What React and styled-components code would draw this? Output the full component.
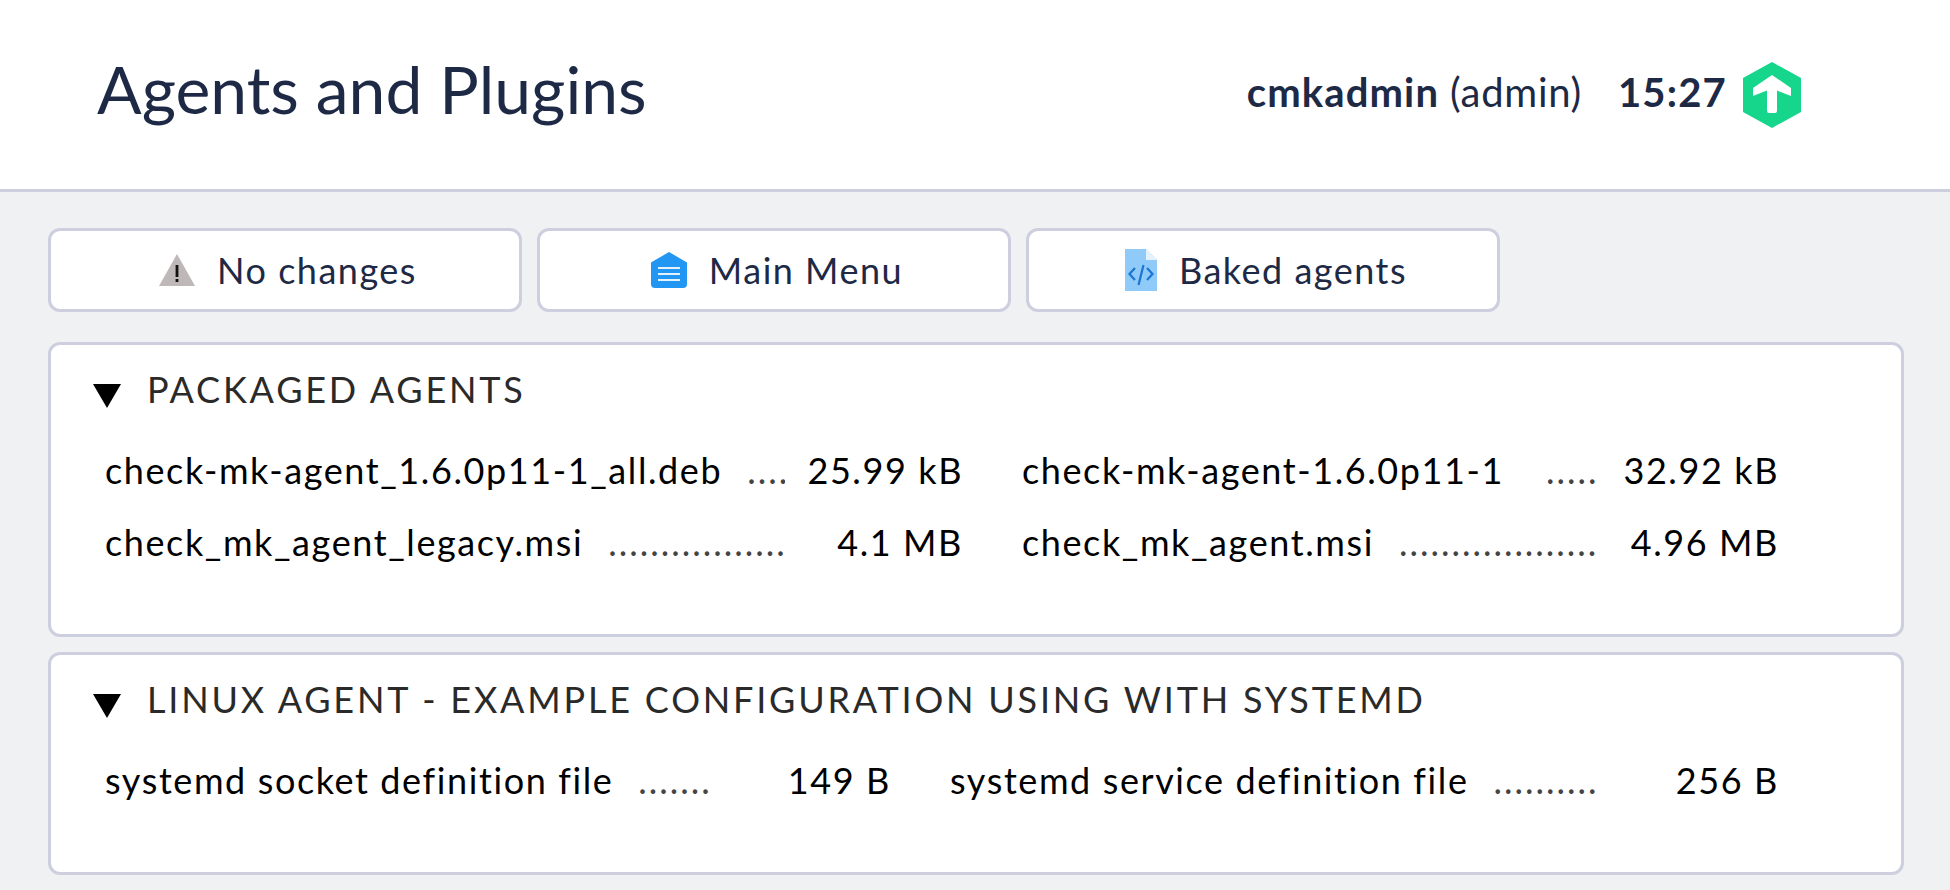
import styled, { createGlobalStyle } from 'styled-components';

const GlobalStyle = createGlobalStyle`
  html, body {
    margin: 0;
    padding: 0;
    background: #f0f1f3;
    font-family: Lato, "Liberation Sans", sans-serif;
  }
`;

const packaged = [
  { name: 'check-mk-agent_1.6.0p11-1_all.deb', size: '25.99 kB', sizeWidth: 178 },
  { name: 'check-mk-agent-1.6.0p11-1', size: '32.92 kB', sizeWidth: 179, clip: true },
  { name: 'check_mk_agent_legacy.msi', size: '4.1 MB', sizeWidth: 178 },
  { name: 'check_mk_agent.msi', size: '4.96 MB', sizeWidth: 179 }
];

const systemd = [
  { name: 'systemd socket definition file', size: '149 B', sizeWidth: 180 },
  { name: 'systemd service definition file', size: '256 B', sizeWidth: 179 }
];

const DOTS = '.'.repeat(60);

function WarningIcon() {
  return (
    <svg width="36" height="32" viewBox="0 0 36 32">
      <path d="M18 0 L36 32 L0 32 Z" fill="#bfb8b8" />
      <rect x="16.6" y="11" width="2.8" height="12" fill="#111" />
      <rect x="16.6" y="25" width="2.8" height="3" fill="#111" />
    </svg>
  );
}

function MenuIcon() {
  return (
    <svg width="36" height="36" viewBox="0 0 36 36">
      <path
        d="M18 0 L36 10.5 V32 a4 4 0 0 1 -4 4 H4 a4 4 0 0 1 -4 -4 V10.5 Z"
        fill="#2196f3"
      />
      <rect x="7" y="15" width="22" height="2" fill="#e3f2fd" />
      <rect x="7" y="21" width="22" height="2" fill="#e3f2fd" />
      <rect x="7" y="27" width="22" height="2" fill="#e3f2fd" />
    </svg>
  );
}

function CodeFileIcon() {
  return (
    <svg width="32" height="42" viewBox="0 0 32 42">
      <path d="M0 0 H21 L32 11 V42 H0 Z" fill="#90caf9" />
      <path d="M21 0 L32 11 H21 Z" fill="#e3f2fd" />
      <path
        d="M10 19 L4.5 25 L10 31 M22 19 L27.5 25 L22 31 M18.5 16 L13.5 36"
        fill="none"
        stroke="#1976d2"
        strokeWidth="2.2"
      />
    </svg>
  );
}

function Logo() {
  return (
    <svg width="58" height="66" viewBox="0 0 58 66">
      <path d="M29 0 L58 16 V50 L29 66 L0 50 V16 Z" fill="#15d68b" />
      <path
        d="M29 13 L48 26 V34 L34 28.5 V49 a2 2 0 0 1 -2 2 H26 a2 2 0 0 1 -2 -2 V28.5 L10 34 V26 Z"
        fill="#fff"
      />
    </svg>
  );
}

function FileEntry({ name, size, sizeWidth, clip }) {
  return (
    <Entry>
      <EntryName $clip={clip}>{name}</EntryName>
      <Dots>{DOTS}</Dots>
      <EntrySize $width={sizeWidth}>{size}</EntrySize>
    </Entry>
  );
}

export default function App() {
  return (
    <>
      <GlobalStyle />
      <Header>
        <Title>Agents and Plugins</Title>
        <HeaderInfo>
          <User>
            <b>cmkadmin</b> (admin)
          </User>
          <Clock>15:27</Clock>
          <Logo />
        </HeaderInfo>
      </Header>

      <Content>
        <Toolbar>
          <ToolButton>
            <WarningIcon />
            No changes
          </ToolButton>
          <ToolButton>
            <MenuIcon />
            Main Menu
          </ToolButton>
          <ToolButton>
            <CodeFileIcon />
            Baked agents
          </ToolButton>
        </Toolbar>

        <Section $height={295}>
          <SectionTitle>
            <Triangle viewBox="0 0 28 24">
              <path d="M0 0 H28 L14 24 Z" />
            </Triangle>
            Packaged agents
          </SectionTitle>
          <EntryGrid $columns="856px 755px">
            {packaged.map((entry) => (
              <FileEntry key={entry.name} {...entry} />
            ))}
          </EntryGrid>
        </Section>

        <Section $height={223}>
          <SectionTitle>
            <Triangle viewBox="0 0 28 24">
              <path d="M0 0 H28 L14 24 Z" />
            </Triangle>
            Linux agent - example configuration using with systemd
          </SectionTitle>
          <EntryGrid $columns="784px 827px">
            {systemd.map((entry) => (
              <FileEntry key={entry.name} {...entry} />
            ))}
          </EntryGrid>
        </Section>
      </Content>
    </>
  );
}

const Header = styled.header`
  height: 189px;
  padding: 0 149px 0 97px;

  background: #fff;
  border-bottom: 3px solid #cdcfdf;

  display: flex;
  justify-content: space-between;
  align-items: center;
`;

const Title = styled.h1`
  margin: 0;
  padding-bottom: 12px;

  color: #1e2a45;
  font-size: 66px;
  font-weight: 400;
  letter-spacing: 0;
`;

const HeaderInfo = styled.div`
  display: flex;
  align-items: center;

  color: #1e2a45;
  font-size: 40px;
`;

const User = styled.div`
  margin-right: 36px;
  padding-bottom: 6px;
  letter-spacing: 0.7px;

  b {
    letter-spacing: 1.1px;
  }
`;

const Clock = styled.div`
  margin-right: 16px;
  padding-bottom: 6px;
  font-weight: 700;
  letter-spacing: 1.2px;
`;

const Content = styled.main`
  padding: 36px 46px 0 48px;

  display: flex;
  flex-direction: column;
  gap: 15px;
`;

const Toolbar = styled.div`
  display: flex;
  gap: 15px;
  margin-bottom: 15px;
`;

const ToolButton = styled.div`
  width: 474px;
  height: 84px;
  box-sizing: border-box;
  padding-left: 6px;

  background: #fff;
  border: 3px solid #cdcfdf;
  border-radius: 12px;

  display: flex;
  align-items: center;
  justify-content: center;
  gap: 22px;

  color: #1e2a45;
  font-size: 36px;
  letter-spacing: 1.5px;
`;

const Section = styled.section`
  height: ${(props) => props.$height}px;
  box-sizing: border-box;
  padding: 22px 0 0 42px;

  background: #fff;
  border: 3px solid #cdcfdf;
  border-radius: 12px;
`;

const SectionTitle = styled.h2`
  margin: 0;

  display: flex;
  align-items: center;
  gap: 26px;

  color: #2a2a2a;
  font-size: 36px;
  font-weight: 400;
  letter-spacing: 2.8px;
  text-transform: uppercase;
`;

const Triangle = styled.svg`
  width: 28px;
  height: 24px;
  margin-top: 13px;
  flex-shrink: 0;
  fill: #000;
`;

const EntryGrid = styled.div`
  margin: 37px 0 0 12px;

  display: grid;
  grid-template-columns: ${(props) => props.$columns};
  column-gap: 61px;
  row-gap: 28px;
`;

const Entry = styled.div`
  height: 44px;

  display: flex;
  align-items: center;

  color: #000;
  font-size: 36px;
  letter-spacing: 1.6px;
  white-space: nowrap;
`;

const EntryName = styled.span`
  flex-shrink: 0;
  padding-right: ${(props) => (props.$clip ? 42 : 25)}px;
`;

const Dots = styled.span`
  flex: 1;
  min-width: 0;
  overflow: hidden;

  color: #444;
  letter-spacing: 2px;
`;

const EntrySize = styled.span`
  flex-shrink: 0;
  width: ${(props) => props.$width}px;
  margin-right: -2px;
  text-align: right;
`;
